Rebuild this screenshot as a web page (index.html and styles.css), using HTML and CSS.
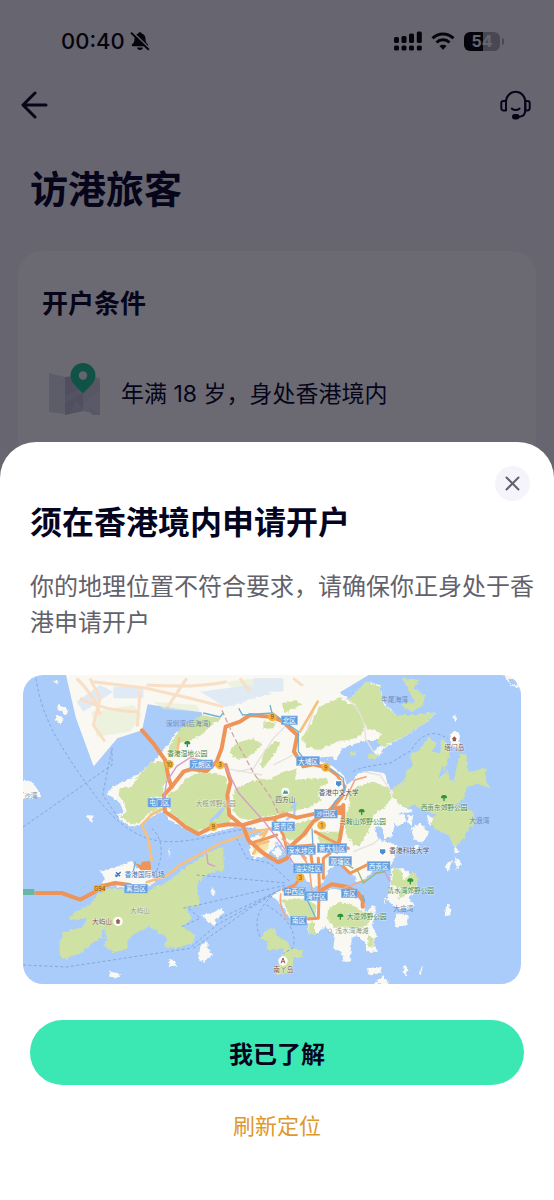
FILE: index.html
```html
<!DOCTYPE html>
<html lang="zh-CN">
<head>
  <meta charset="UTF-8" />
  <meta name="viewport" content="width=device-width, initial-scale=1" />
  <title>访港旅客</title>
  <link rel="stylesheet" href="styles.css">
</head>
<body>

  <div class="page">
    <div class="status-bar">
      <span class="status-time">00:40</span>
      <svg class="icon-bell" width="20" height="20" viewBox="0 0 20 20">
        <path d="M10 1.200c-.9 0-1.500.5-1.700 1.200C5.800 3.100 4.500 5.200 4.500 7.800c0 3-.8 4.200-2.300 5.500-.7.600-.5 1.900.6 1.900h14.400c1.100 0 1.300-1.300.6-1.900-1.500-1.300-2.300-2.500-2.300-5.500 0-2.600-1.300-4.700-3.800-5.400C11.500 1.700 10.900 1.200 10 1.200z" />
        <path d="M7.200 16.600h5.600a2.800 2.300 0 0 1-5.600 0z" />
        <path class="bell-gap" d="M2 .8l18 17.400" />
        <path class="bell-slash" d="M1 1.600l17.800 17.200" />
      </svg>
      <div class="status-right">
        <svg width="28" height="20" viewBox="0 0 28 20">
          <rect x="0" y="6" width="5" height="6" rx="1.500" />
          <rect x="7.500" y="5" width="5" height="7" rx="1.500" />
          <rect x="15" y="2.500" width="5" height="9.500" rx="1.500" />
          <rect x="22.800" y="0.500" width="5" height="11.500" rx="1.500" />
          <rect x="0" y="14.500" width="5" height="5" rx="1.500" />
          <rect x="7.500" y="14.500" width="5" height="5" rx="1.500" />
          <rect x="15" y="14.500" width="5" height="5" rx="1.500" />
          <rect x="22.800" y="14.500" width="5" height="5" rx="1.500" />
        </svg>
        <svg width="24" height="20" viewBox="0 0 24 20">
          <path class="wifi-arc" d="M1.500 7.300a15 15 0 0 1 21 0" />
          <path class="wifi-arc" d="M5.500 11.500a9.300 9.300 0 0 1 13 0" />
          <path d="M12 18.800l-3.600-3.700a5.200 5.200 0 0 1 7.200 0z" />
        </svg>
        <div class="battery">
          <span>54</span>
        </div>
      </div>
    </div>

    <div class="nav">
      <button class="nav-button" aria-label="返回">
        <svg width="28" height="30" viewBox="0 0 28 30">
          <path d="M25 15H2.500M14 3L2 15l12 12" />
        </svg>
      </button>
      <button class="nav-button" aria-label="客服">
        <svg class="icon-headset" width="31" height="30" viewBox="0 0 31 30">
          <path d="M6 20V11.500a9.500 9.500 0 0 1 19.300 0V20c0 4.500-2.500 6.500-6 6.700h-3" />
          <path d="M6 11H3.500A2.200 2.200 0 0 0 1.300 13.200v5A2.200 2.200 0 0 0 3.500 20.400H6zM25.300 11h2.200a2.200 2.200 0 0 1 2.200 2.200v5a2.200 2.200 0 0 1-2.200 2.200h-2.200z" />
          <path d="M11.800 18.600q3.800 2.800 7.800 0" />
          <rect class="headset-mic" x="13" y="25" width="5.500" height="3.400" rx="1.700" />
        </svg>
      </button>
    </div>

    <h1 class="page-title">访港旅客</h1>

    <div class="card">
      <h2 class="card-title">开户条件</h2>
      <div class="condition">
        <svg width="54" height="54" viewBox="0 0 54 54">
          <path fill="#dcdce6" d="M1 11l16 4v37L1 50z" />
          <path fill="#b9bccd" d="M17 15l18-2v36l-18 4z" />
          <path fill="#d4d5e2" d="M35 13l17 3v37l-17-4z" />
          <path fill="#cbcddb" d="M35 27l7-10 10 3v8l-17 14zM44 53l-7-11 15 11z" />
          <path fill="#c4c7d6" d="M17 34l18-9v6L17 41zM22 51l6-12 7 8v2z" />
          <path fill="#20c48f" d="M35 1a12.500 12.500 0 0 1 12.500 12.500C47.500 21 40 26 35 31.500 30 26 22.500 21 22.500 13.500A12.500 12.500 0 0 1 35 1z" />
          <circle cx="35" cy="13.500" r="4.200" fill="#eef4f5" />
        </svg>
        <p>年满 18 岁，身处香港境内</p>
      </div>
    </div>
  </div>

  <!-- Bottom sheet -->
  <div class="overlay">
    <div class="sheet" role="dialog" aria-labelledby="sheetTitle">
      <button class="close" aria-label="关闭">
        <svg width="15" height="15" viewBox="0 0 15 15">
          <path d="M1.500 1.500l12 12M13.500 1.500l-12 12" />
        </svg>
      </button>
      <h2 class="sheet-title" id="sheetTitle">须在香港境内申请开户</h2>
      <p class="sheet-text">你的地理位置不符合要求，请确保你正身处于香港申请开户</p>

      <svg class="map" viewBox="9 10 1494 928">
        <defs>
          <filter id="coast" x="0" y="0" width="1" height="1">
            <feTurbulence type="fractalNoise" baseFrequency="0.1" numOctaves="2" seed="4" />
            <feDisplacementMap in="SourceGraphic" scale="12" xChannelSelector="R" yChannelSelector="G" />
          </filter>
        </defs>
        <rect class="water" x="9" y="10" width="1494" height="928" />

        <!-- Shenzhen, faded -->
        <path class="land" d="M138 10H1046L960 62 850 130 600 140 545 122 383 98 366 176 292 200 221 284 168 140z" />
        <g class="faded">
          <path class="faded-green" d="M215 120L340 100 365 130 330 180 230 195zM400 90L530 100 540 120 430 112zM620 30L710 20 750 60 660 80z" />
          <path class="faded-water" d="M170 90L240 40 280 60 190 120zM280 45h90v35h-90zM540 60L690 40 790 80 730 112 640 120zM700 20h90v40h-90z" />
          <path class="faded-road" d="M170 20Q230 80 240 130M220 30L380 50 510 80 610 105M380 40Q520 50 620 30M500 20L440 110M820 20L870 60 895 95M360 60L352 165" />
          <path class="faded-road" d="M180 80Q260 120 360 120M660 20L690 60M210 20L240 80 220 160 255 210" />
        </g>

        <g filter="url(#coast)">
          <!-- New Territories and Kowloon -->
          <path class="land" d="M545 122L605 112 700 80 860 40 960 62 985 85 1040 30 1080 40 1090 90 1130 130 1190 130 1250 122 1215 155 1160 190 1090 230 1075 258 1060 240 1100 205 1040 205 965 232 950 262 890 262 940 285 972 312 980 340 1000 325 1015 305 1050 298 1095 305 1105 345 1130 370 1150 405 1180 415 1165 425 1145 420 1130 440 1115 495 1095 500 1085 470 1070 460 1065 480 1080 505 1130 520 1125 560 1105 590 1060 592 1050 610 1015 635 990 615 960 575 930 590 905 640 880 645 850 620 830 600 810 560 780 520 740 485 700 468 650 466 600 478 540 492 500 472 450 445 430 418 400 430 365 460 330 464 300 445 290 430 310 420 300 392 260 367 280 345 350 310 400 270 440 225 470 180 520 165 560 160 550 140z" />
          <path class="green" d="M440 265L390 275 350 320 335 345 300 350 295 370 310 390 320 420 300 435 330 458 360 455 385 425 430 410 385 405 390 380 430 375 430 345 445 320z" />
          <path class="green" d="M447 225L480 172 545 130 605 140 570 165 545 190 515 205 475 215 475 250 450 255z" />
          <path class="green" d="M470 355L500 320 540 300 590 305 620 320 625 360 620 420 635 440 625 455 560 470 530 480 500 465 470 440 450 420 440 370z" />
          <path class="green" d="M630 230L660 210 700 200 725 215 705 240 680 258 650 262 632 245zM718 285L735 235 765 208 783 212 760 250 730 290zM786 94L830 86 844 100 794 124zM730 150L770 150 760 170 730 172z" />
          <path class="green" d="M645 350L720 320 745 325 790 300 830 290 825 325 880 320 920 320 925 335 900 345 895 370 905 385 860 410 790 425 740 435 690 445 660 440 640 420 640 370z" />
          <path class="green" d="M845 200L870 160 900 105 960 75 985 95 1010 100 1035 150 1030 180 1010 200 950 210 900 235 860 225z" />
          <path class="green" d="M985 85L1040 30 1080 45 1090 95 1130 130 1190 130 1250 122 1215 155 1160 190 1090 225 1070 210 1085 185 1040 170 1010 100z" />
          <path class="green" d="M1145 20L1200 25 1180 50 1215 70 1210 100 1180 120 1145 105 1150 95 1185 95 1170 60zM1045 245L1080 250 1065 262 1045 262zM985 245L1010 238 1005 255z" />
          <path class="green" d="M1010 345L1060 330 1110 350 1115 380 1090 410 1060 430 1050 470 1020 520 1000 520 975 480 975 440 990 400 985 370z" />
          <path class="green" d="M1120 350L1150 330 1160 300 1180 280 1170 250 1200 235 1225 195 1250 215 1235 240 1260 245 1265 200 1285 225 1290 260 1275 290 1300 330 1320 245 1340 250 1345 300 1400 290 1395 320 1410 350 1370 335 1340 350 1330 385 1300 400 1360 420 1365 455 1345 470 1330 500 1305 530 1285 490 1240 470 1230 440 1250 430 1200 410 1180 400 1160 410 1130 390 1115 370z" />
          <path class="green" d="M790 470L860 445 890 440 860 490 820 510 790 495zM890 480L960 480 950 520 900 515z" />
          <path class="land" d="M1174 470L1200 455 1228 485 1205 515 1180 500zM1120 440L1150 425 1160 450 1130 465zM1165 430L1180 430 1175 460 1165 455zM1220 430L1240 440 1230 465zM1185 520L1195 520 1195 535 1182 532z" />

          <!-- Tsing Yi and harbour -->
          <path class="land" d="M690 500L730 480 765 490 770 520 740 552 700 560 690 540z" />
          <path class="yellow" d="M700 515L735 495 750 510 735 545 700 550z" />
          <path class="land" d="M755 540L775 525 790 545 772 560z" />
          <path class="water" d="M945 590L965 580 1010 620 1000 632zM610 500L625 498 622 510z" />

          <!-- Lantau -->
          <path class="land" d="M238 600L260 596 335 568 350 590 395 590 405 630 350 660 320 650 245 635 255 620z" />
          <path class="green" d="M235 665L270 650 315 655 380 660 450 625 500 585 560 545 610 525 612 595 580 600 545 618 530 640 540 700 500 710 515 740 490 765 525 790 520 815 470 830 435 825 440 795 405 775 385 765 345 785 325 805 320 835 280 840 250 820 265 800 240 800 215 815 185 845 145 855 140 870 120 850 118 810 130 782 190 765 200 740 145 745 165 720 210 700z" />
          <path class="water" d="M245 790L252 770 260 795 248 800z" />

          <!-- Hong Kong Island -->
          <path class="land" d="M755 670L790 650 830 655 860 665 900 670 930 650 960 655 1000 675 1030 690 1035 720 1065 700 1067 730 1055 760 1070 790 1060 820 1075 840 1040 840 1035 810 1010 790 995 800 990 870 970 870 965 840 940 830 945 790 915 765 880 790 865 780 865 755 810 740 785 700z" />
          <path class="green" d="M785 685L850 680 890 700 885 735 850 745 810 735zM925 710L960 690 1000 700 1025 720 1055 720 1045 760 1010 770 940 765 920 740zM865 755L885 750 885 790 868 790zM1040 790L1060 800 1060 830 1045 825z" />

          <!-- Clear Water Bay and Lamma -->
          <path class="land" d="M1095 700L1110 650 1115 590 1150 590 1190 625 1190 655 1165 680 1185 700 1170 715 1130 710 1095 680z" />
          <path class="green" d="M1120 585L1145 600 1150 625 1180 600 1197 620 1185 650 1155 670 1135 685 1140 650 1115 640z" />
          <path class="green" d="M720 800L740 775 765 770 770 795 800 805 810 830 850 835 845 855 820 860 815 905 770 910 765 890 785 870 790 830 755 835 740 830 745 810z" />

          <!-- Outlying islands -->
          <path class="land" d="M1130 725L1164 730 1160 760 1130 768 1122 745zM1156 880L1166 894 1158 914 1146 902zM1040 890L1085 885 1082 900 1046 910zM1070 930L1090 910 1108 938H1065zM1210 882L1202 908 1197 902z" />
          <path class="land" d="M1274 582L1296 564 1286 600zM1304 556L1326 574 1310 594zM1300 520L1320 540 1305 545zM1276 710L1288 695 1292 730 1278 735zM1298 132L1314 136 1306 152zM1290 190L1304 176 1320 190 1316 230 1292 220zM1454 12H1500V50L1470 42z" />
          <path class="water" d="M1464 22L1490 22 1490 42 1470 36z" />
          <path class="land" d="M116 96L146 116 138 130 112 110zM112 128L132 142 122 156 104 142zM9 324L35 330 50 350 65 376 9 382zM200 430L220 432 218 452 208 446zM98 30L118 26 114 36z" />
          <path class="land" d="M546 730L582 722 605 708 612 720 588 740 584 765 570 755zM542 820L562 810 564 835 580 850 550 870 535 862zM446 862L466 866 470 886 450 884zM268 894L278 905 300 908 295 918 268 915zM574 650L588 652 582 674 574 668zM445 540L450 530 448 555z" />
        </g>
        <path class="line-thin" d="M650 300L700 290 760 200 800 160M760 280L820 250M616 290L726 310M880 120L860 180M980 80Q1040 130 1036 200L1060 240M1000 540L1060 516 1080 500M1030 300L1080 310 1120 370" />
        <path class="line-water" d="M812 410L826 398 822 430 798 444M570 450L610 410 590 440M1270 285L1262 310 1280 295M1285 260L1292 325M890 262L940 258" />

        <!-- Ferry lines -->
        <path class="ferry" d="M48 20Q62 120 120 216T240 390 372 496 560 496 700 470M9 466L276 280V230L248 370 296 440M395 470Q430 500 422 560L410 600" />
        <path class="ferry" d="M9 880L139 886 509 830 590 760 770 660M490 710L800 640M530 610L800 634M600 740L790 650M650 500L680 560 750 575 810 630M520 830L690 710 780 655M720 795Q690 730 760 670M740 700Q840 760 818 830L790 845M485 765L540 740 500 705" />
        <path class="ferry" d="M1000 300Q1020 285 1110 275L1175 235Q1200 185 1250 185L1285 200" />

        <!-- Roads -->
        <path class="road-yellow" d="M430 412L395 428 365 460 385 500 395 565M380 632L440 612 480 580 545 545 600 515 700 480 760 470M893 90L870 130 840 180M456 340L490 305M478 200L470 250M720 490L740 480 700 546M700 520L745 510M770 440L790 420" />
        <path class="road" d="M366 176L400 215 436 266 446 320 455 345" />
        <path class="road" d="M455 345L432 370 435 420 465 440 495 465 535 487 580 465 625 458 670 460 720 445 760 440 800 428 830 438 890 425 940 420" />
        <path class="road" d="M455 345L490 300 515 292 560 298 590 270 605 230 617 165 660 150 690 130 757 136 790 150 815 175 832 190 822 240 850 284 880 278 917 287" />
        <path class="road" d="M617 280L632 330 622 370 628 430 670 465 685 505 730 545 775 572 800 560 820 530" />
        <path class="road" d="M810 525L850 490 880 450 930 415 965 375M970 400L970 440 960 500 950 540M48 664L125 664 180 684 225 660 240 645 285 634 330 640M905 655L935 638 980 645 1015 665 1028 685 1028 705" />
        <path class="road-mid" d="M917 287L950 310 975 345 965 375 940 410M690 515L740 500 770 490M760 440L790 490 800 530M885 480L930 505 985 530M895 560L898 640 895 740 865 742M910 620L910 560 930 545M955 570L990 605 1050 575 1100 590M840 620L825 640 790 655M810 525L880 520M870 530L880 600" />
        <path class="interchange" d="M345 575L362 580 365 570 390 568 395 595 362 596zM940 405L965 400 970 430 935 430z" />
        <path class="road-thin" d="M782 665Q775 710 805 745M1035 625L970 650M850 545L870 605 876 660M785 500L860 560M975 385L1005 325 1040 315M840 545L865 580" />
        <path class="rail-purple" d="M430 390L440 330 470 284 510 258 560 270 616 284 656 364 736 454 782 514 830 590M560 546L564 576 586 584M1060 605L1095 600 1110 630" />
        <path class="rail-dash" d="M606 116L642 196 702 306 752 376 776 426" />
        <path class="rail-blue" d="M550 124L600 136 610 124M656 110L668 130 758 124 800 155 835 180 835 240 855 265M750 100L756 124M930 290L970 320 974 360 945 390 935 410M876 470L880 550M845 650L886 736M346 570L340 600M1028 670L1035 690" />
        <path class="rail-green" d="M1010 590L1030 634 1070 604 1095 600M940 555L1000 590" />

        <!-- Route shields -->
        <g class="shield">
          <circle cx="448" cy="278" r="13" /><text x="448" y="285">10</text>
          <circle cx="757" cy="136" r="13" /><text x="757" y="143">9</text>
          <circle cx="600" cy="280" r="13" /><text x="600" y="287">3</text>
          <circle cx="917" cy="287" r="13" /><text x="917" y="294">9</text>
          <circle cx="580" cy="465" r="13" /><text x="580" y="472">9</text>
          <circle cx="905" cy="461" r="13" /><text x="905" y="468">1</text>
          <circle cx="841" cy="618" r="13" /><text x="841" y="625">3</text>
          <rect x="222" y="640" width="34" height="20" rx="5" /><text x="239" y="657">G94</text>
        </g>
        <rect class="gate" x="9" y="652" width="34" height="18" />

        <!-- District tags -->
        <g class="tag">
          <rect x="510" y="265" width="68" height="26" /><text x="544" y="286">元朗区</text>
          <rect x="384" y="380" width="68" height="26" /><text x="418" y="401">屯门区</text>
          <rect x="784" y="133" width="48" height="26" /><text x="808" y="154">北区</text>
          <rect x="830" y="255" width="68" height="26" /><text x="864" y="276">大埔区</text>
          <rect x="884" y="413" width="68" height="26" /><text x="918" y="434">沙田区</text>
          <rect x="756" y="451" width="68" height="26" /><text x="790" y="472">葵青区</text>
          <rect x="800" y="522" width="86" height="26" /><text x="843" y="543">深水埗区</text>
          <rect x="892" y="516" width="88" height="26" /><text x="936" y="537">黄大仙区</text>
          <rect x="927" y="555" width="68" height="26" /><text x="961" y="576">观塘区</text>
          <rect x="820" y="576" width="88" height="28" /><text x="864" y="598">油尖旺区</text>
          <rect x="1042" y="570" width="68" height="26" /><text x="1076" y="591">西贡区</text>
          <rect x="792" y="648" width="64" height="24" /><text x="824" y="668">中西区</text>
          <rect x="854" y="660" width="68" height="26" /><text x="888" y="681">湾仔区</text>
          <rect x="964" y="652" width="48" height="26" /><text x="988" y="673">东区</text>
          <rect x="812" y="734" width="48" height="26" /><text x="836" y="755">南区</text>
          <rect x="314" y="638" width="68" height="26" /><text x="348" y="659">离岛区</text>
        </g>

        <!-- Place names -->
        <g class="place place-park">
          <text x="502" y="252">香港湿地公园</text>
          <text x="1028" y="458">马鞍山郊野公园</text>
          <text x="1272" y="416">西贡东郊野公园</text>
          <text x="1172" y="665">清水湾郊野公园</text>
          <text x="1040" y="742">大潭郊野公园</text>
        </g>
        <g class="place place-soft">
          <text x="587" y="403">大榄郊野公园</text>
          <text x="360" y="723">大屿山</text>
          <text x="996" y="784">浅水湾海滩</text>
        </g>
        <g class="place place-water">
          <text x="505" y="163">深圳湾(后海湾)</text>
          <text x="1124" y="92">牛尾海湾</text>
          <text x="1378" y="455">大浪湾</text>
          <text x="1150" y="717">大庙湾</text>
          <text x="32" y="380">沙湾</text>
        </g>
        <g class="place place-spot">
          <text x="796" y="392">四方山</text>
          <text x="956" y="369">香港中文大学</text>
          <text x="1168" y="545">香港科技大学</text>
        </g>
        <g class="place place-sight">
          <text x="1303" y="235">塔门岛</text>
          <text x="246" y="757">大屿山</text>
          <text x="790" y="901">南丫岛</text>
        </g>
        <text class="place place-airport" x="374" y="616">香港国际机场</text>

        <!-- Park, school and sight markers -->
        <g class="tree">
          <path d="M502 208c-8 0-11 6-8 10h6v8h4v-8h6c3-4 0-10-8-10z" />
          <path d="M1025 412c-8 0-11 6-8 10h6v8h4v-8h6c3-4 0-10-8-10z" />
          <path d="M1272 370c-8 0-11 6-8 10h6v8h4v-8h6c3-4 0-10-8-10z" />
          <path d="M1171 620c-8 0-11 6-8 10h6v8h4v-8h6c3-4 0-10-8-10z" />
          <path d="M961 726c-8 0-11 6-8 10h6v8h4v-8h6c3-4 0-10-8-10z" />
        </g>
        <circle class="marker" cx="796" cy="360" r="12" />
        <path class="hill" d="M788 366l6-12 4 6 3-4 4 10z" />
        <circle class="marker" cx="956" cy="336" r="12" />
        <path class="school" d="M948 329h16v9q-4 6-8 7-4-1-8-7z" />
        <circle class="marker" cx="1088" cy="540" r="12" />
        <path class="school" d="M1080 533h16v9q-4 6-8 7-4-1-8-7z" />
        <circle class="marker" cx="1303" cy="202" r="13" />
        <path class="sight" d="M1295 202l8-8 8 8h-3v7h-10v-7z" />
        <circle class="marker" cx="294" cy="749" r="14" />
        <path class="sight" d="M286 749l8-8 8 8h-3v7h-10v-7z" />
        <circle class="marker" cx="789" cy="868" r="14" />
        <path class="sight-line" d="M783 875l6-16 6 16M785 870h8" />
        <circle class="beach" cx="930" cy="777" r="5" />
        <path class="plane" d="M287 615l15-14M288 602l12 12M286 609l6 6" />
      </svg>

      <button class="primary">我已了解</button>
      <a class="refresh" href="#">刷新定位</a>
    </div>
  </div>

</body>
</html>
```
FILE: styles.css
```css
* {
  box-sizing: border-box;
}

body {
  margin: 0;
  font-family: Inter, "Noto Sans CJK SC", sans-serif;
  color: #04041f;
  background-color: #f3f3f7;
}

h1, h2, p {
  margin: 0;
}

button {
  border: none;
  padding: 0;
  background: none;
  font-family: inherit;
  color: inherit;
  cursor: pointer;
}

.page {
  display: flex;
  flex-direction: column;
  min-height: 100vh;
}

/* Status bar */
.status-bar {
  display: flex;
  align-items: center;
  height: 82px;
  padding: 0 51px 0 61px;
  color: #000;
}

.status-time {
  font-size: 22px;
  font-weight: 500;
}

.icon-bell {
  margin-left: 5px;
}

.bell-gap {
  stroke: #f3f3f7;
  stroke-width: 2;
}

.bell-slash {
  stroke: #000;
  stroke-width: 2;
}

.status-right {
  display: flex;
  align-items: center;
  gap: 9px;
  margin-left: auto;
}

.wifi-arc {
  fill: none;
  stroke: #000;
  stroke-width: 3;
}

.battery {
  position: relative;
  width: 36px;
  height: 19px;
  margin-right: 3px;
  border-radius: 6px;
  background: linear-gradient(90deg, #000 54%, #a9a9b1 54%);
  color: #f3f3f7;
  font-size: 16px;
  font-weight: 700;
  line-height: 19px;
  text-align: center;
}

.battery::after {
  content: "";
  position: absolute;
  top: 6px;
  right: -4px;
  width: 2px;
  height: 7px;
  border-radius: 0 2px 2px 0;
  background-color: #a9a9b1;
}

/* Header */
.nav {
  display: flex;
  align-items: center;
  justify-content: space-between;
  height: 46px;
  padding: 0 23px 0 21px;
}

.nav-button svg {
  display: block;
  fill: none;
  stroke: #04041f;
  stroke-width: 3;
  stroke-linecap: round;
  stroke-linejoin: round;
}

.nav-button .icon-headset {
  stroke-width: 2;
}

.headset-mic {
  fill: #04041f;
}

.page-title {
  margin: 35px 30px 36px;
  font-size: 38px;
  font-weight: 700;
  line-height: 52px;
}

.card {
  flex: 1;
  margin: 0 18px;
  padding: 35px 24px;
  border-radius: 24px 24px 0 0;
  background-color: #fff;
}

.card-title {
  font-size: 26px;
  font-weight: 700;
  line-height: 36px;
}

.condition {
  display: flex;
  align-items: flex-end;
  gap: 19px;
  margin-top: 40px;
  padding-left: 6px;
  font-size: 23px;
  line-height: 44px;
}

/* Bottom sheet */
.overlay {
  position: fixed;
  top: 0;
  right: 0;
  bottom: 0;
  left: 0;
  display: flex;
  flex-direction: column;
  justify-content: flex-end;
  background-color: rgba(8, 6, 22, 0.6);
}

.sheet {
  position: relative;
  display: flex;
  flex-direction: column;
  padding: 61px 30px 59px;
  border-radius: 36px 36px 0 0;
  background-color: #fff;
}

.close {
  position: absolute;
  top: 24px;
  right: 24px;
  display: flex;
  align-items: center;
  justify-content: center;
  width: 35px;
  height: 35px;
  border-radius: 50%;
  background-color: #f5f4fb;
}

.close svg {
  fill: none;
  stroke: #62626c;
  stroke-width: 2;
  stroke-linecap: round;
}

.sheet-title {
  font-size: 32px;
  font-weight: 700;
  line-height: 40px;
}

.sheet-text {
  margin: 26px -12px 0 0;
  color: #62626c;
  font-size: 24px;
  line-height: 36px;
}

.primary {
  height: 65px;
  margin-top: 36px;
  border-radius: 33px;
  background-color: #3be8b4;
  font-size: 24px;
  font-weight: 700;
}

.refresh {
  align-self: center;
  margin-top: 26px;
  color: #e0982c;
  font-size: 22px;
  line-height: 30px;
  text-decoration: none;
}

/* Map */
.map {
  display: block;
  margin: 34px 3px 0 -7px;
  border-radius: 20px;
}

.water { fill: #aaccfb; }
.land { fill: #faf8f2; }
.green { fill: #cfe2a4; }
.yellow { fill: #f7e3a8; }

.faded {
  filter: blur(2px);
  opacity: 0.6;
}

.faded-green { fill: #e3efd0; }
.faded-water { fill: #cfe2f7; }

.faded-road {
  fill: none;
  stroke: #f8cfa8;
  stroke-width: 9;
}

.ferry {
  fill: none;
  stroke: #82a6da;
  stroke-width: 3;
  stroke-dasharray: 9 7;
}

.line-thin {
  fill: none;
  stroke: #e6e0e0;
  stroke-width: 4;
}

.line-water {
  fill: none;
  stroke: #aaccfb;
  stroke-width: 7;
}

.road, .road-mid, .road-yellow {
  fill: none;
  stroke-linejoin: round;
  stroke-linecap: round;
}

.road {
  stroke: #ee9459;
  stroke-width: 12;
}

.road-mid {
  stroke: #f0985c;
  stroke-width: 9;
}

.interchange {
  fill: #ee9459;
}

.road-yellow {
  stroke: #f4c181;
  stroke-width: 8;
}

.road-thin {
  fill: none;
  stroke: #f3a984;
  stroke-width: 5;
}

.rail-purple, .rail-dash, .rail-blue, .rail-green {
  fill: none;
  stroke-width: 4;
}

.rail-purple { stroke: #d69acb; }
.rail-blue { stroke: #70b1d8; }
.rail-green { stroke: #91ba7a; }

.rail-dash {
  stroke: #d4a5a8;
  stroke-dasharray: 16 8;
}

.shield circle, .shield rect {
  fill: #f4b23e;
}

.shield text {
  fill: #71501c;
  font-size: 17px;
  text-anchor: middle;
}

.gate {
  fill: #67b7a4;
}

.tag rect {
  fill: #639ddd;
  stroke: #8bb8ea;
  stroke-width: 2;
}

.tag text {
  fill: #fff;
  font-size: 20px;
  text-anchor: middle;
}

.place {
  font-size: 20px;
  text-anchor: middle;
  paint-order: stroke;
  stroke: rgba(255, 255, 255, 0.5);
  stroke-width: 3px;
}

.place-park { fill: #4b8748; }
.place-soft { fill: #8b9a80; }
.place-water { fill: #7289b4; stroke: none; }
.place-spot { fill: #55595f; }
.place-sight { fill: #7e5750; }
.place-airport { fill: #3e72b5; }

.marker { fill: #fff; }
.tree { fill: #2f9440; }
.hill { fill: #4c9a81; }
.school { fill: #4a8fd0; }
.sight { fill: #9a5c4c; }

.sight-line {
  fill: none;
  stroke: #9a5c4c;
  stroke-width: 3;
}

.beach {
  fill: #fff;
  stroke: #999;
  stroke-width: 2;
}

.plane {
  fill: none;
  stroke: #3579c6;
  stroke-width: 4;
}
```
